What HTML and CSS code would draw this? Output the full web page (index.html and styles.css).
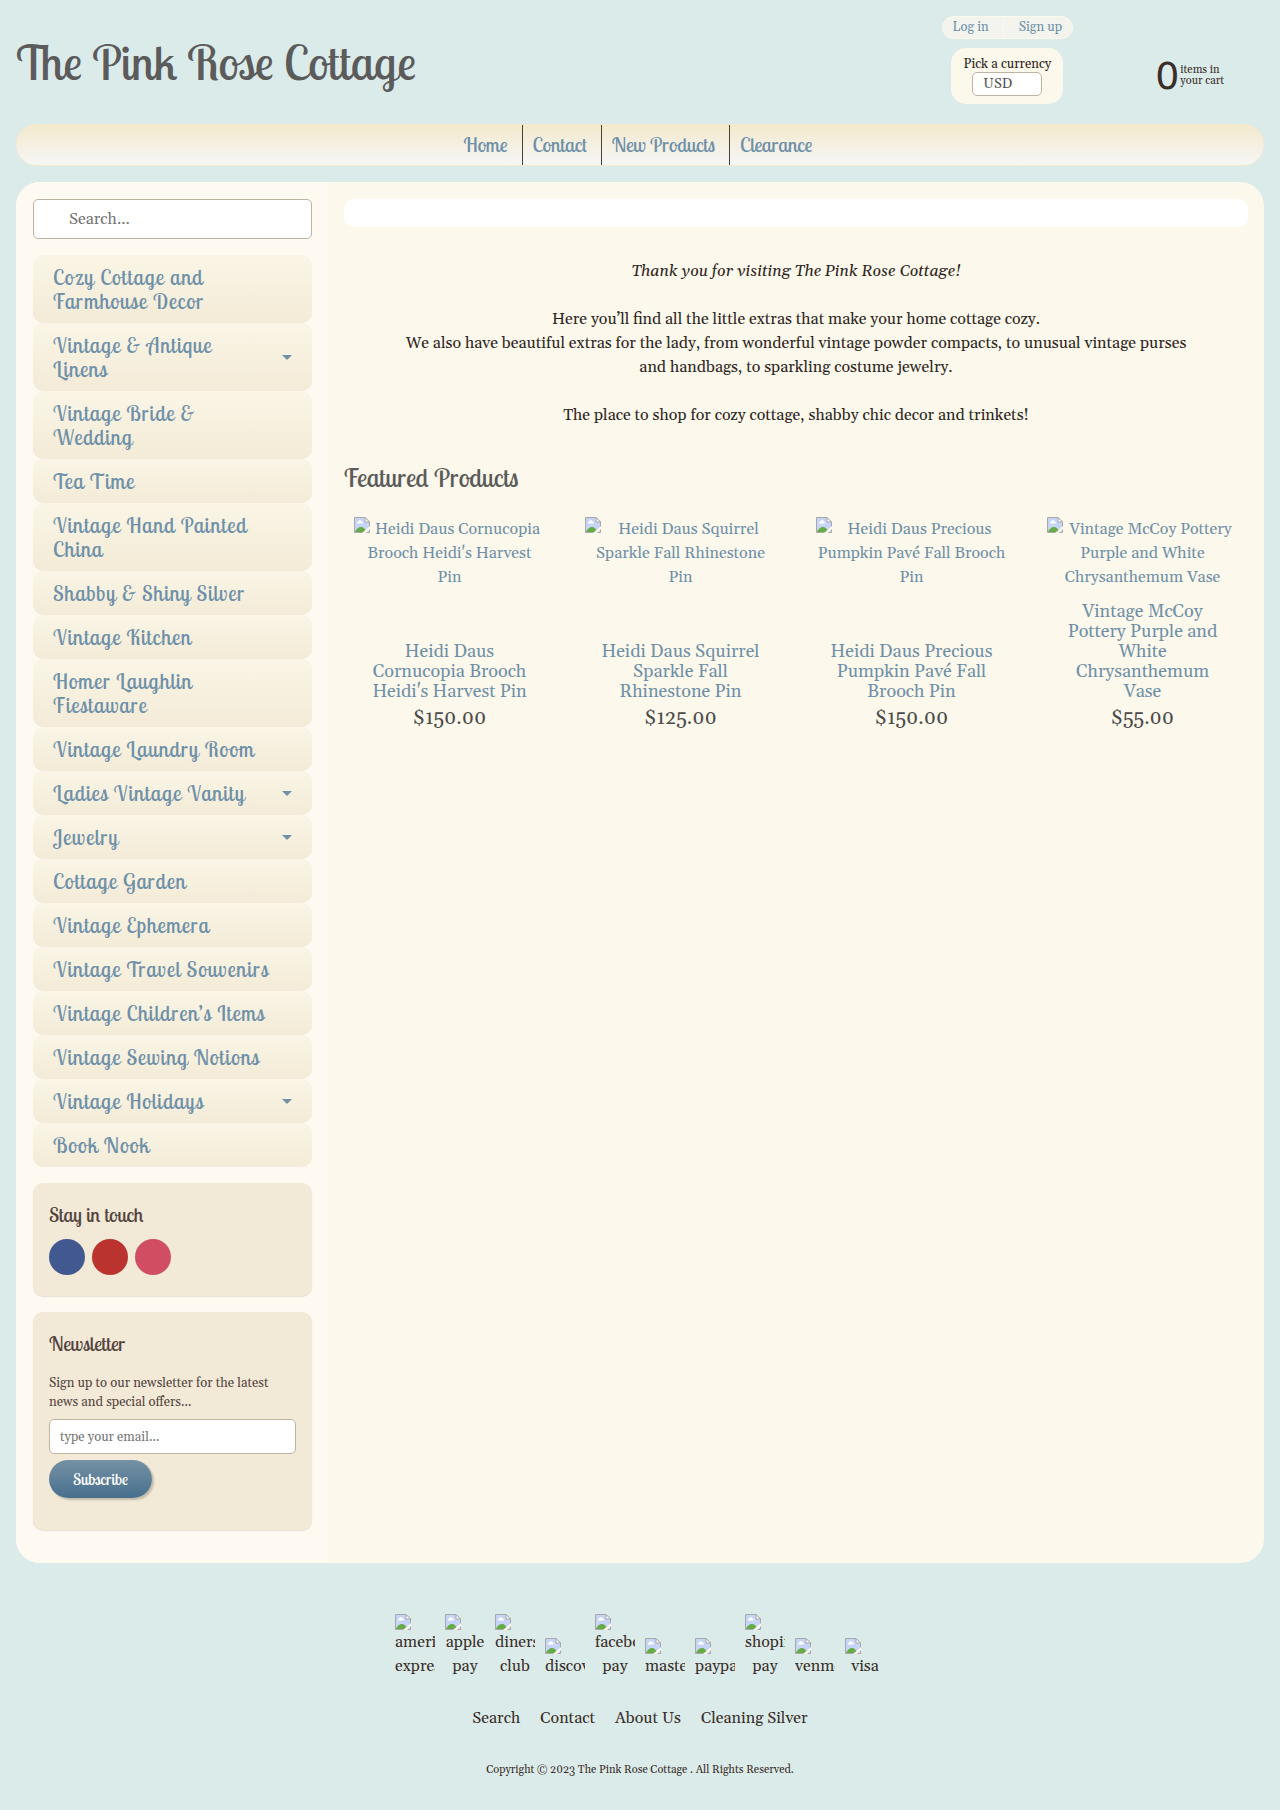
FILE: index.html
```html
<!DOCTYPE html>
<html lang="en">
<head>
<meta charset="utf-8">
<meta name="viewport" content="width=device-width, initial-scale=1">
<title>The Pink Rose Cottage</title>
<link rel="stylesheet" href="styles.css">
</head>
<body>
<svg class="sprite" aria-hidden="true">
  <symbol id="picture" viewBox="0 0 16 16">
    <path d="M.5.5h10.500l4.500 4.500v10.500H.5z" fill="#c6d4f5" stroke="#a8a8a8"/>
    <path d="M3 6.500a1.500 1.500 0 0 1 1.200-2 2 2 0 0 1 3.600 0 1.200 1.200 0 0 1 .7 2z" fill="#fff"/>
    <path d="M1 15c1-3 3.500-5 6-5s4 2 5.500 5z" fill="#66ab45"/>
    <path d="M8 16l8-7v3l-4 4z" fill="#fcf8ec"/>
    <path d="M11 .5V5h4.500z" fill="#fff" stroke="#a8a8a8"/>
  </symbol>
</svg>

<header class="header">
  <h1 class="logo">The Pink Rose Cottage</h1>
  <div class="tools">
    <div class="account">
      <div class="account-links">
        <a href="#">Log in</a>
        <a href="#">Sign up</a>
      </div>
      <div class="currency">
        <label for="currency">Pick a currency</label>
        <select id="currency"><option>USD</option></select>
      </div>
    </div>
    <a class="cart" href="#"><span class="cart-count">0</span><span class="cart-text">items in<br>your cart</span></a>
  </div>
</header>

<nav class="nav">
  <a href="#">Home</a>
  <a href="#">Contact</a>
  <a href="#">New Products</a>
  <a href="#">Clearance</a>
</nav>

<div class="content">
  <aside class="sidebar">
    <input class="search" type="search" placeholder="Search..." aria-label="Search">
    <ul class="menu">
      <li><a href="#">Cozy Cottage and<br>Farmhouse Decor</a></li>
      <li><a class="more" href="#">Vintage &amp; Antique<br>Linens</a></li>
      <li><a href="#">Vintage Bride &amp;<br>Wedding</a></li>
      <li><a href="#">Tea Time</a></li>
      <li><a href="#">Vintage Hand Painted<br>China</a></li>
      <li><a href="#">Shabby &amp; Shiny Silver</a></li>
      <li><a href="#">Vintage Kitchen</a></li>
      <li><a href="#">Homer Laughlin<br>Fiestaware</a></li>
      <li><a href="#">Vintage Laundry Room</a></li>
      <li><a class="more" href="#">Ladies Vintage Vanity</a></li>
      <li><a class="more" href="#">Jewelry</a></li>
      <li><a href="#">Cottage Garden</a></li>
      <li><a href="#">Vintage Ephemera</a></li>
      <li><a href="#">Vintage Travel Souvenirs</a></li>
      <li><a href="#">Vintage Children’s Items</a></li>
      <li><a href="#">Vintage Sewing Notions</a></li>
      <li><a class="more" href="#">Vintage Holidays</a></li>
      <li><a href="#">Book Nook</a></li>
    </ul>
    <section class="box">
      <h2>Stay in touch</h2>
      <div class="social">
        <a class="facebook" href="#" aria-label="Facebook"></a>
        <a class="pinterest" href="#" aria-label="Pinterest"></a>
        <a class="instagram" href="#" aria-label="Instagram"></a>
      </div>
    </section>
    <section class="box newsletter">
      <h2>Newsletter</h2>
      <label for="email">Sign up to our newsletter for the latest<br>news and special offers...</label>
      <input id="email" type="email" placeholder="type your email...">
      <button type="button">Subscribe</button>
    </section>
  </aside>

  <main class="main">
    <div class="banner"></div>
    <div class="intro">
      <p><em>Thank you for visiting The Pink Rose Cottage!</em></p>
      <p>Here you’ll find all the little extras that make your home cottage cozy.<br>We also have beautiful extras for the lady, from wonderful vintage powder compacts, to unusual vintage purses<br>and handbags, to sparkling costume jewelry.</p>
      <p>The place to shop for cozy cottage, shabby chic decor and trinkets!</p>
    </div>
    <h2 class="featured">Featured Products</h2>
    <div class="products">
      <article class="product">
        <a class="photo" href="#"><svg><use href="#picture"/></svg>Heidi Daus Cornucopia<br>Brooch Heidi's Harvest<br>Pin</a>
        <h3><a href="#">Heidi Daus<br>Cornucopia Brooch<br>Heidi's Harvest Pin</a></h3>
        <p class="price">$150.00</p>
      </article>
      <article class="product">
        <a class="photo" href="#"><svg><use href="#picture"/></svg>Heidi Daus Squirrel<br>Sparkle Fall Rhinestone<br>Pin</a>
        <h3><a href="#">Heidi Daus Squirrel<br>Sparkle Fall<br>Rhinestone Pin</a></h3>
        <p class="price">$125.00</p>
      </article>
      <article class="product">
        <a class="photo" href="#"><svg><use href="#picture"/></svg>Heidi Daus Precious<br>Pumpkin Pavé Fall Brooch<br>Pin</a>
        <h3><a href="#">Heidi Daus Precious<br>Pumpkin Pavé Fall<br>Brooch Pin</a></h3>
        <p class="price">$150.00</p>
      </article>
      <article class="product">
        <a class="photo" href="#"><svg><use href="#picture"/></svg>Vintage McCoy Pottery<br>Purple and White<br>Chrysanthemum Vase</a>
        <h3><a href="#">Vintage McCoy<br>Pottery Purple and<br>White<br>Chrysanthemum<br>Vase</a></h3>
        <p class="price">$55.00</p>
      </article>
    </div>
  </main>
</div>

<footer class="footer">
  <ul class="payments">
    <li><svg><use href="#picture"/></svg>american express</li>
    <li><svg><use href="#picture"/></svg>apple pay</li>
    <li><svg><use href="#picture"/></svg>diners club</li>
    <li><svg><use href="#picture"/></svg>discover</li>
    <li><svg><use href="#picture"/></svg>facebook pay</li>
    <li><svg><use href="#picture"/></svg>master</li>
    <li><svg><use href="#picture"/></svg>paypal</li>
    <li><svg><use href="#picture"/></svg>shopify pay</li>
    <li><svg><use href="#picture"/></svg>venmo</li>
    <li><svg><use href="#picture"/></svg>visa</li>
  </ul>
  <nav class="footer-links">
    <a href="#">Search</a>
    <a href="#">Contact</a>
    <a href="#">About Us</a>
    <a href="#">Cleaning Silver</a>
  </nav>
  <p class="copyright">Copyright © 2023 The Pink Rose Cottage . All Rights Reserved.</p>
</footer>
</body>
</html>
```
FILE: styles.css
```css
:root {
  --display: "Lobster Two", Lobster, "Liberation Serif", serif;
  --text: Georgia, Gelasio, "Liberation Serif", serif;
  --blue: #6e90a8;
  --cream: #fcf8eb;
}

* { box-sizing: border-box; }

body {
  margin: 0;
  padding: 0 16px;
  background: #dbebea;
  color: #3a2e28;
  font: 16px/24px var(--text);
}

a { color: var(--blue); text-decoration: none; }
h1, h2, h3, p, ul { margin: 0; padding: 0; font-weight: 400; }
ul { list-style: none; }
.sprite { display: none; }

.header {
  display: flex;
  justify-content: space-between;
  padding-top: 16px;
  height: 124px;
}
.logo {
  padding-top: 14px;
  color: #5b5b5b;
  font: 48px/64px var(--display);
}
.tools { display: flex; gap: 82px; padding-right: 40px; }
.account {
  display: flex;
  flex-direction: column;
  align-items: center;
  gap: 9px;
}
.account-links {
  display: flex;
  padding: 2px 0;
  border: 1px solid var(--cream);
  border-radius: 12px;
  background: #f3f4ee;
  font-size: 13px;
  line-height: 17px;
}
.account-links a { padding: 0 10px; }
.account-links a + a { padding-left: 15px; border-left: 1px solid var(--cream); margin-left: 4px; }
.currency {
  display: flex;
  flex-direction: column;
  align-items: center;
  padding: 8px 12px;
  border-radius: 15px;
  background: var(--cream);
  color: #2b2320;
  font-size: 13px;
  line-height: 16px;
}
.currency select {
  appearance: none;
  width: 70px;
  height: 24px;
  padding: 0 10px;
  border: 1px solid #bfb3a4;
  border-radius: 5px;
  background: #fff;
  color: #555;
  font: 14px/20px var(--text);
}
.cart {
  display: flex;
  align-items: center;
  align-self: flex-start;
  gap: 1px;
  padding-top: 38px;
  color: #3a2e28;
}
.cart-count { font: 38px/44px "DejaVu Sans", sans-serif; }
.cart-text { font-size: 11px; line-height: 11px; }

.nav {
  display: flex;
  justify-content: center;
  margin-bottom: 16px;
  border: 1px solid #f3ead0;
  border-radius: 20px;
  background: linear-gradient(#f3e9cd, #f6f6f6);
  font: 20px/40px var(--display);
}
.nav a { padding: 0 14px 0 10px; }
.nav a + a { border-left: 1px solid #4a3f34; }

.content {
  display: flex;
  border-radius: 24px;
  overflow: hidden;
  background: var(--cream);
}
.sidebar {
  flex: 0 0 25%;
  padding: 17px 16px 33px 17px;
  background: #fef9f1;
}
.search {
  display: block;
  width: 100%;
  height: 40px;
  padding: 0 35px;
  border: 1px solid #bfb3a4;
  border-radius: 5px;
  background: #fff;
  font: 16px/24px var(--text);
}
.menu { margin: 16px 0; }
.menu a {
  display: block;
  padding: 10px 20px;
  border-radius: 10px;
  background: linear-gradient(#faf5e6, #f3ebd7);
  font: 21px/24px var(--display);
  letter-spacing: 1px;
}
.menu .more {
  display: flex;
  align-items: center;
  justify-content: space-between;
}
.menu .more::after {
  content: "";
  border: 5px solid transparent;
  border-top-color: var(--blue);
  border-bottom: 0;
}
.box {
  padding: 20px 16px;
  border-radius: 10px;
  background: #f2e9d7;
  box-shadow: 0 1px 1px #e6dfd6;
  color: #54443f;
}
.box h2 { font: 20px/24px var(--display); }
.social { display: flex; gap: 7px; padding: 12px 0 1px; }
.social a { width: 36px; height: 36px; border-radius: 50%; }
.facebook { background: #425890; }
.pinterest { background: #ba332f; }
.instagram { background: #d14d62; }
.newsletter {
  margin-top: 16px;
  padding-bottom: 32px;
  font-size: 13px;
  line-height: 19px;
}
.newsletter label { display: block; margin: 18px 0 7px; }
.newsletter input {
  display: block;
  width: 100%;
  height: 35px;
  padding: 0 10px;
  border: 1px solid #bfb3a4;
  border-radius: 5px;
  background: #fff;
  font: 13px/19px var(--text);
}
.newsletter button {
  display: block;
  margin-top: 6px;
  padding: 0 24px;
  border: 0;
  border-radius: 19px;
  background: linear-gradient(#7591a4, #476f8e);
  box-shadow: 2px 2px 2px #c4baa9;
  color: #fff;
  font: 16px/38px var(--display);
}
input::placeholder { color: #757575; opacity: 1; }

.main { flex: 1; min-width: 0; padding: 17px 16px; }
.banner { height: 28px; border-radius: 10px; background: #fff; }
.intro {
  display: grid;
  gap: 24px;
  padding: 32px 0;
  color: #2e2623;
  text-align: center;
}
.featured {
  color: #5b5b5b;
  font: 26px/38px var(--display);
}
.products {
  display: grid;
  grid-template-columns: repeat(4, 1fr);
  margin: 20px -10px 0;
}
.product {
  display: flex;
  flex-direction: column;
  padding: 0 20px;
  text-align: center;
}
.photo { margin-bottom: 13px; }
.photo svg { float: left; width: 16px; height: 16px; }
.product h3 { margin-top: auto; font-size: 18px; line-height: 20px; }
.price { color: #4a4a4a; font-size: 20px; line-height: 32px; }

.footer {
  display: flex;
  flex-direction: column;
  align-items: center;
  padding-top: 51px;
  text-align: center;
}
.payments { display: flex; align-items: flex-end; gap: 10px; }
.payments li { width: 40px; overflow: hidden; }
.payments svg { display: block; width: 16px; height: 16px; }
.footer-links { display: flex; gap: 20px; margin-top: 28px; }
.footer-links a { color: #3a2e28; }
.copyright { padding: 28px 0 25px; font-size: 11px; }
```
